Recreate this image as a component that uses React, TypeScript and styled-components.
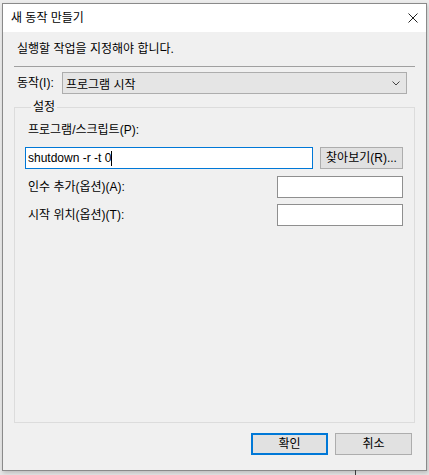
import { createGlobalStyle, styled } from 'styled-components';

const GlobalStyle = createGlobalStyle`
    html, body {
        margin: 0;
        padding: 0;
        background: #e9e9e9;
    }
    body {
        font-family: "Liberation Sans", "Noto Sans CJK KR", sans-serif;
        font-size: 12px;
        color: #000;
    }
`

const Desktop = styled.div`
    position: relative;
    width: 429px;
    height: 475px;
    padding: 3px 0 0 2px;
    box-sizing: border-box;
    overflow: hidden;
    background: linear-gradient(#ececec, #e6e6e6);
`
const BackLine = styled.div`
    position: absolute;
    left: 355px;
    top: 470px;
    width: 1px;
    height: 5px;
    background: #3a3a3a;
`
const Window = styled.div`
    width: 425px;
    height: 468px;
    box-sizing: border-box;
    border: 1px solid #8a8a8a;
    background: #f0f0f0;
    box-shadow: 1px 2px 4px rgba(0, 0, 0, 0.18);
    display: flex;
    flex-direction: column;
`
const TitleBar = styled.div`
    height: 28px;
    flex-shrink: 0;
    background: #fff;
    display: flex;
    align-items: center;
    justify-content: space-between;
    padding: 0 8px 0 8px;
    line-height: 16px;
`
const CloseIcon = styled.svg`
    width: 10px;
    height: 10px;
`
const Body = styled.div`
    flex: 1;
    display: flex;
    flex-direction: column;
    padding: 0 11px 15px 11px;
`
const Instruction = styled.div`
    margin-top: 9px;
    padding-left: 3px;
    line-height: 16px;
`
const Separator = styled.div`
    margin-top: 9px;
    height: 1px;
    background: #a0a0a0;
`
const ActionRow = styled.div`
    margin-top: 5px;
    display: flex;
    align-items: center;
    padding-left: 3px;
    height: 22px;
`
const ActionLabel = styled.span`
    width: 45px;
    line-height: 16px;
`
const Select = styled.div`
    width: 345px;
    height: 22px;
    box-sizing: border-box;
    border: 1px solid #adadad;
    background: #e5e5e5;
    display: flex;
    align-items: center;
    justify-content: space-between;
    padding: 0 6px 0 3px;
`
const Group = styled.fieldset`
    flex: 1;
    margin: 6px 0 0 0;
    padding: 8px 11px 0 10px;
    border: 1px solid #dcdcdc;
    min-width: 0;
`
const Legend = styled.legend`
    margin-left: 6px;
    padding: 0 2px;
    line-height: 14px;
`
const FieldLabel = styled.div`
    padding-left: 3px;
    line-height: 16px;
`
const Row = styled.div<{ $gap: number }>`
    margin-top: ${p => p.$gap}px;
    display: flex;
    align-items: center;
    justify-content: space-between;
    height: 22px;
`
const TextField = styled.div<{ $width: number; $active?: boolean }>`
    width: ${p => p.$width}px;
    height: 22px;
    box-sizing: border-box;
    background: #fff;
    border: 1px solid ${p => (p.$active ? '#0078d7' : '#8f8f8f')};
    display: flex;
    align-items: center;
    padding-left: 2px;
    line-height: 16px;
    white-space: pre;
`
const Caret = styled.span`
    width: 1px;
    height: 15px;
    background: #000;
`
const Button = styled.button<{ $primary?: boolean; $width?: number }>`
    width: ${p => p.$width ?? 77}px;
    height: 22px;
    box-sizing: border-box;
    font: inherit;
    color: #000;
    background: #e1e1e1;
    border: ${p => (p.$primary ? '2px solid #0078d7' : '1px solid #adadad')};
    padding: 0;
    line-height: 16px;
`
const Footer = styled.div`
    margin-top: 10px;
    display: flex;
    justify-content: flex-end;
    gap: 7px;
    padding-right: 3px;
`

const App: React.FC = () => {
    return (
        <>
            <GlobalStyle />
            <Desktop>
                <Window>
                    <TitleBar>
                        <span>새 동작 만들기</span>
                        <CloseIcon viewBox="0 0 10 10">
                            <path d="M0.5 0.5 L9.5 9.5 M9.5 0.5 L0.5 9.5" stroke="#222" strokeWidth="1" />
                        </CloseIcon>
                    </TitleBar>
                    <Body>
                        <Instruction>실행할 작업을 지정해야 합니다.</Instruction>
                        <Separator />
                        <ActionRow>
                            <ActionLabel>동작(I):</ActionLabel>
                            <Select>
                                <span>프로그램 시작</span>
                                <svg width="8" height="5" viewBox="0 0 8 5">
                                    <path d="M0.5 0.5 L4 4 L7.5 0.5" stroke="#444" fill="none" strokeWidth="1" />
                                </svg>
                            </Select>
                        </ActionRow>
                        <Group>
                            <Legend>설정</Legend>
                            <FieldLabel>프로그램/스크립트(P):</FieldLabel>
                            <Row $gap={9}>
                                <TextField $width={288} $active>
                                    shutdown -r -t 0<Caret />
                                </TextField>
                                <Button $width={83}>찾아보기(R)...</Button>
                            </Row>
                            <Row $gap={7}>
                                <FieldLabel>인수 추가(옵션)(A):</FieldLabel>
                                <TextField $width={126} />
                            </Row>
                            <Row $gap={6}>
                                <FieldLabel>시작 위치(옵션)(T):</FieldLabel>
                                <TextField $width={126} />
                            </Row>
                        </Group>
                        <Footer>
                            <Button $primary>확인</Button>
                            <Button>취소</Button>
                        </Footer>
                    </Body>
                </Window>
                <BackLine />
            </Desktop>
        </>
    );
}

export default App;
